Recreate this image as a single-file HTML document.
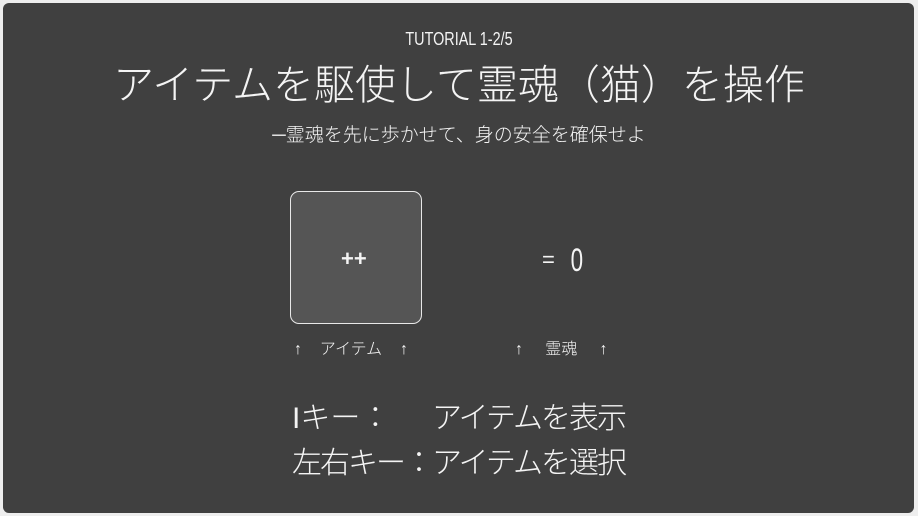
<!DOCTYPE html>
<html><head><meta charset="utf-8"><style>
html,body{margin:0;padding:0;background:#eeeeee;width:918px;height:516px;overflow:hidden}
.f{position:absolute;left:3px;top:3px;width:911px;height:510px;background:#404040;border-radius:6px}
.t{position:absolute;color:#f4f4f4;font-family:"Liberation Sans","Noto Sans CJK JP",sans-serif;white-space:nowrap;line-height:1;font-weight:300}
.c{left:0;width:918px;text-align:center}
.box{position:absolute;left:290px;top:191px;width:130px;height:131px;border:1.5px solid #e8e8e8;border-radius:9px;background:#555555}
</style></head><body>
<div class="f"></div>
<div class="t c" style="top:30px;font-size:18px;transform:scaleX(0.8)">TUTORIAL 1-2/5</div>
<div class="t c" style="top:65px;font-size:41px;letter-spacing:0px">アイテムを駆使して霊魂（猫）を操作</div>
<div class="t c" style="top:126px;font-size:19px">─霊魂を先に歩かせて、身の安全を確保せよ</div>
<div class="box"></div>
<div class="t" style="left:341px;top:248px;font-size:22px;font-weight:700">++</div>
<div class="t" style="left:542px;top:249px;font-size:22px">=</div>
<div class="t" style="left:568px;top:244px;font-size:32px;transform:scaleX(0.7)">0</div>
<div class="t" style="left:294px;top:342px;font-size:16px">↑&nbsp;&nbsp;&nbsp;&nbsp;アイテム&nbsp;&nbsp;&nbsp;&nbsp;↑</div>
<div class="t" style="left:515px;top:342px;font-size:16px">↑&nbsp;&nbsp;&nbsp;&nbsp;&nbsp;霊魂&nbsp;&nbsp;&nbsp;&nbsp;&nbsp;↑</div>
<div class="t" style="left:292px;top:404px;font-size:30px">Iキー：</div>
<div class="t" style="left:432px;top:404px;font-size:30px;letter-spacing:-2px">アイテムを表示</div>
<div class="t" style="left:292px;top:449px;font-size:30px;letter-spacing:-2px">左右キー：</div>
<div class="t" style="left:432px;top:449px;font-size:30px;letter-spacing:-2px">アイテムを選択</div>
</body></html>
